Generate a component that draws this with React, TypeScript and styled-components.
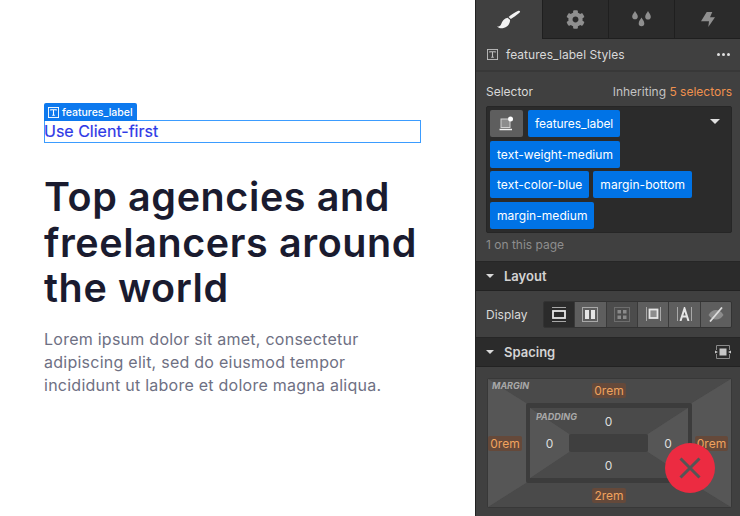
import styled, { createGlobalStyle } from 'styled-components';
import { FaCog } from 'react-icons/fa';

const GlobalStyle = createGlobalStyle`
  html, body { margin: 0; padding: 0; background: #fff; }
  * { box-sizing: border-box; }
  #root { width: 740px; height: 516px; overflow: hidden; }
`;

const Page = styled.div`
  width: 740px;
  height: 516px;
  display: flex;
  overflow: hidden;
  font-family: Inter, 'Liberation Sans', sans-serif;
`;

const Canvas = styled.main`
  width: 475px;
  flex: none;
  padding: 120px 54px 0 44px;
  background: #fff;
`;

const Selected = styled.div`
  position: relative;
  height: 23px;
  width: 377px;
  border: 1px solid #3b9cff;
  font-size: 16px;
  line-height: 21px;
  font-weight: 400;
  letter-spacing: 0;
  text-indent: -1px;
  color: #2d38e6;
  white-space: nowrap;
  -webkit-text-stroke: 0.2px #2d38e6;
`;

const SelectedTag = styled.div`
  position: absolute;
  left: -1px;
  top: -18px;
  height: 18px;
  padding: 0 4px;
  display: flex;
  align-items: center;
  gap: 3px;
  background: #0d79ee;
  border-radius: 2px 2px 0 0;
  color: #fff;
  font-size: 10.5px;
  font-weight: 500;
  text-indent: 0;
  -webkit-text-stroke: 0;
`;

const Title = styled.h1`
  margin: 32px 0 0;
  font-size: 39.5px;
  line-height: 45.5px;
  font-weight: 600;
  letter-spacing: 0.6px;
  color: #1a1b2f;
  white-space: nowrap;
`;

const Lead = styled.p`
  margin: 16px 0 0;
  font-size: 16px;
  line-height: 23.2px;
  color: #6e7083;
  white-space: nowrap;
  letter-spacing: 0.25px;
`;

const Panel = styled.aside`
  position: relative;
  flex: 1;
  border-left: 1px solid #222;
  background: #404040;
  color: #d9d9d9;
  font-size: 12px;
  overflow: hidden;
`;

const Tabs = styled.div`
  display: grid;
  grid-template-columns: 67px 66px 66px 1fr;
  height: 39px;
  background: #2b2b2b;
`;

const Tab = styled.div<{ $active?: boolean }>`
  display: flex;
  align-items: center;
  justify-content: center;
  color: ${(p) => (p.$active ? '#f2f2f2' : '#8f8f8f')};
  background: ${(p) => (p.$active ? '#404040' : '#2b2b2b')};
  border-right: 1px solid #1f1f1f;
  border-bottom: ${(p) => (p.$active ? 'none' : '1px solid #1f1f1f')};
  &:last-child { border-right: none; }
`;

const PanelHead = styled.div`
  height: 33px;
  padding: 0 10px 0 11px;
  display: flex;
  align-items: center;
  gap: 8px;
  border-bottom: 2px solid #383838;
  color: #d9d9d9;
`;

const HeadName = styled.span`
  flex: 1;
  letter-spacing: 0.05px;
`;

const Dots = styled.span`
  display: flex;
  gap: 2px;
  i { width: 3px; height: 3px; border-radius: 50%; background: #e0e0e0; }
`;

const SelectorBlock = styled.section`
  padding: 12px 8px 0 10px;
  height: 189px;
`;

const SelectorHead = styled.div`
  display: flex;
  justify-content: space-between;
  line-height: 16px;
`;

const Inherit = styled.span`
  color: #c4c4c4;
  b { font-weight: 400; color: #f0914e; }
`;

const SelectorBox = styled.div`
  position: relative;
  margin-top: 6px;
  width: 246px;
  height: 127px;
  padding: 3px 20px 0 3px;
  display: flex;
  flex-wrap: wrap;
  align-content: flex-start;
  gap: 3.7px 4px;
  background: #2b2b2b;
  border: 1px solid #262626;
  border-radius: 2px;
`;

const SymbolButton = styled.div`
  width: 33px;
  height: 27px;
  margin-right: 1px;
  display: flex;
  align-items: center;
  justify-content: center;
  background: #5e5e5e;
  border-radius: 2px;
  color: #e6e6e6;
`;

const Chip = styled.span<{ $squeeze?: boolean }>`
  height: 27px;
  padding: 0 7px;
  display: flex;
  align-items: center;
  background: #0073e6;
  border-radius: 2px;
  color: #fff;
  font-size: 12px;
  letter-spacing: ${(p) => (p.$squeeze ? '-0.09px' : '0.05px')};
`;

const Caret = styled.span`
  position: absolute;
  right: 11px;
  top: 12px;
  border-left: 5px solid transparent;
  border-right: 5px solid transparent;
  border-top: 5px solid #e0e0e0;
`;

const OnPage = styled.div`
  margin-top: 4px;
  color: #8e8e8e;
  line-height: 16px;
`;

const SectionHead = styled.div`
  height: 30px;
  padding: 0 9px 0 10px;
  display: flex;
  align-items: center;
  gap: 10px;
  background: #2b2b2b;
  border-top: 1px solid #262626;
  border-bottom: 1px solid #222;
  font-size: 13px;
  font-weight: 600;
  color: #d4d4d4;
  span { flex: 1; }
`;

const SmallCaret = styled.i`
  border-left: 4px solid transparent;
  border-right: 4px solid transparent;
  border-top: 4px solid #d9d9d9;
`;

const DisplayRow = styled.div`
  height: 46px;
  padding: 0 8px 0 10px;
  display: flex;
  align-items: center;
  justify-content: space-between;
`;

const Segments = styled.div`
  display: flex;
  width: 189px;
  height: 27px;
  border: 1px solid #333;
  border-radius: 2px;
  overflow: hidden;
`;

const Segment = styled.div<{ $active?: boolean; $dim?: boolean }>`
  flex: 1;
  display: flex;
  align-items: center;
  justify-content: center;
  background: ${(p) => (p.$active ? '#2b2b2b' : p.$dim ? '#4c4c4c' : '#5e5e5e')};
  color: ${(p) => (p.$dim ? '#8a8a8a' : '#e6e6e6')};
  border-right: 1px solid #3a3a3a;
  &:last-child { border-right: none; }
`;

const SpacingBody = styled.div`
  padding: 11px 8px 0 11px;
`;

const MarginBox = styled.div`
  position: relative;
  width: 245px;
  height: 130px;
  display: grid;
  grid-template-columns: 38px 166px 39px;
  grid-template-rows: 24px 80px 24px;
  background: #4f4f4f;
  border: 1px solid #383838;
  border-radius: 2px;
`;

const Bevel = styled.svg`
  position: absolute;
  inset: 0;
  width: 100%;
  height: 100%;
`;

const MarginLabel = styled.span`
  position: absolute;
  left: 4px;
  top: 1px;
  font-size: 9px;
  font-weight: 700;
  font-style: italic;
  color: #a8a8a8;
`;

const PaddingLabel = styled(MarginLabel)`
  left: 6px;
  top: 3px;
`;

const Cell = styled.div<{ $column: number; $row: number; $nudge?: number; $lift?: number }>`
  position: relative;
  grid-column: ${(p) => p.$column};
  grid-row: ${(p) => p.$row};
  padding-right: ${(p) => p.$nudge ?? 0}px;
  padding-bottom: ${(p) => p.$lift ?? 0}px;
  display: flex;
  align-items: center;
  justify-content: center;
`;

const Changed = styled.span`
  padding: 0 2px;
  height: 15px;
  line-height: 15px;
  background: #65493a;
  border-radius: 2px;
  color: #f0a35e;
  font-size: 12px;
`;

const Plain = styled.span`
  color: #dedede;
  font-size: 12px;
`;

const PaddingRing = styled.div`
  position: relative;
  grid-column: 2;
  grid-row: 2;
  border-style: solid;
  border-width: 5px 4px;
  border-color: #3c3c3c;
  border-radius: 2px;
  display: grid;
  grid-template-columns: 39px 79px 40px;
  grid-template-rows: 26px 18px 26px;
  background: #4f4f4f;
`;

const CenterBlock = styled.div`
  position: relative;
  grid-column: 2;
  grid-row: 2;
  background: #3f3f3f;
  border-radius: 2px;
`;

const CloseFab = styled.button`
  position: absolute;
  left: 189px;
  top: 443px;
  width: 50px;
  height: 50px;
  padding: 0;
  border: none;
  border-radius: 50%;
  background: #ec2b41;
  color: #555;
  display: flex;
  align-items: center;
  justify-content: center;
`;

const bevelFaces = (w: number, h: number, l: number, t: number, r: number, b: number) => [
  { points: `0,0 ${w},0 ${r},${t} ${l},${t}`, fill: '#4a4a4a' },
  { points: `0,${h} ${w},${h} ${r},${b} ${l},${b}`, fill: '#4a4a4a' },
  { points: `0,0 ${l},${t} ${l},${b} 0,${h}`, fill: '#565656' },
  { points: `${w},0 ${r},${t} ${r},${b} ${w},${h}`, fill: '#565656' },
];

const Faces = ({ w, h, l, t, r, b }: Record<'w' | 'h' | 'l' | 't' | 'r' | 'b', number>) => (
  <Bevel viewBox={`0 0 ${w} ${h}`} preserveAspectRatio="none">
    {bevelFaces(w, h, l, t, r, b).map((face) => (
      <polygon key={face.points} points={face.points} fill={face.fill} />
    ))}
  </Bevel>
);

const TextBoxIcon = ({ color = '#bdbdbd' }: { color?: string }) => (
  <svg width="11" height="11" viewBox="0 0 12 12" fill="none">
    <rect x="0.5" y="0.5" width="11" height="11" stroke={color} />
    <path d="M3 3.800V3h6v.8M6 3v6M4.600 9h2.800" stroke={color} strokeWidth="1.200" />
  </svg>
);

const BrushIcon = () => (
  <svg width="24" height="19" viewBox="0 0 24 19" fill="currentColor">
    <path d="M23 1.200c.3.6-.3 1.300-1.200 2.100-2.400 2.200-5 4.100-8 5.800l-2.200-2C14.200 4.600 17.600 2.400 20.800 1 21.900.5 22.700.6 23 1.200Z" />
    <path d="M10.700 7.800l2.400 2.200c-.2 4-2.600 7.600-7.400 8.200C3.800 18.400 1.600 18 0 16.400c2 .2 3.100-.4 4-2 1.200-3.400 3.300-6 6.700-6.600Z" />
  </svg>
);

const DropsIcon = () => (
  <svg width="19" height="16" viewBox="0 0 19 16" fill="currentColor">
    <path d="M3 0c1 2 2.800 3.500 2.800 5.400A2.800 2.800 0 0 1 .2 5.400C.2 3.500 2 2 3 0Z" />
    <path d="M16 0c1 2 2.800 3.500 2.800 5.800a2.800 2.800 0 0 1-5.600 0C13.200 3.500 15 2 16 0Z" />
    <path d="M9.500 6.500c1 2 2.800 3.400 2.800 6a2.800 2.800 0 0 1-5.600 0c0-2.600 1.800-4 2.800-6Z" />
  </svg>
);

const BoltIcon = () => (
  <svg width="14" height="15" viewBox="0 0 14 15" fill="currentColor">
    <path d="M5.700 0h5.600L9 5.300h5L7.300 15 8 9.300H0L5.700 0Z" />
  </svg>
);

const SymbolIcon = () => (
  <svg width="15" height="15" viewBox="0 0 15 15">
    <rect x="2" y="3" width="9" height="8.500" fill="#8c8c8c" stroke="#d0d0d0" />
    <path d="M.5 13.500h12.500" stroke="#f2f2f2" strokeWidth="1.500" />
    <circle cx="11.500" cy="3" r="2.500" fill="#fff" />
  </svg>
);

const SpacingIcon = () => (
  <svg width="16" height="16" viewBox="0 0 16 16" fill="none" stroke="#8a8a8a">
    <rect x="4.500" y="4.500" width="7" height="7" fill="#c8c8c8" stroke="none" />
    <path d="M1.500 6V1.500h13V6M1.500 10v4.500h13V10" />
    <path d="M0 6.500 3 8 0 9.500ZM16 6.500 13 8l3 1.500Z" fill="#c8c8c8" stroke="none" />
  </svg>
);

const blockIcon = (
  <svg width="14" height="15" viewBox="0 0 14 15" fill="none" stroke="currentColor">
    <path d="M0 .5h14M0 14.500h14" stroke="#a8a8a8" />
    <rect x="1" y="4" width="12" height="7" strokeWidth="1.800" />
  </svg>
);

const flexIcon = (
  <svg width="16" height="15" viewBox="0 0 16 15" fill="currentColor">
    <rect x="0.500" y="0.500" width="15" height="14" fill="none" stroke="#a8a8a8" />
    <rect x="3" y="3" width="4" height="9" />
    <rect x="9" y="3" width="4" height="9" />
  </svg>
);

const gridIcon = (
  <svg width="16" height="15" viewBox="0 0 16 15" fill="currentColor">
    <rect x="0.500" y="0.500" width="15" height="14" fill="none" stroke="#6e6e6e" />
    <rect x="3.500" y="3" width="3.500" height="3.500" />
    <rect x="9" y="3" width="3.500" height="3.500" />
    <rect x="3.500" y="8.500" width="3.500" height="3.500" />
    <rect x="9" y="8.500" width="3.500" height="3.500" />
  </svg>
);

const inlineBlockIcon = (
  <svg width="15" height="14" viewBox="0 0 15 14" fill="none" stroke="currentColor">
    <path d="M.5 0v14M14.500 0v14" stroke="#a8a8a8" />
    <rect x="3.500" y="2.500" width="8" height="8.500" fill="#8c8c8c" strokeWidth="1.800" />
  </svg>
);

const inlineIcon = (
  <svg width="15" height="14" viewBox="0 0 15 14" fill="none" stroke="currentColor">
    <path d="M.5 0v14M14.500 0v14" stroke="#a8a8a8" />
    <path d="M3.500 14 7.500 1.500l4 12.500M5 9.500h5" strokeWidth="2" />
  </svg>
);

const hiddenIcon = (
  <svg width="16" height="15" viewBox="0 0 16 15" fill="none">
    <path d="M.5 8C2.500 4.500 5 3 8 3s5.500 1.500 7.500 5c-2 3-4.500 4.500-7.500 4.500S2.500 11 .5 8Z" fill="#8c8c8c" />
    <path d="M2 14.500 14 .5" stroke="#dcdcdc" strokeWidth="1.800" />
  </svg>
);

const App = () => {
  return (
    <Page>
      <GlobalStyle />
      <Canvas>
        <Selected>
          <SelectedTag>
            <TextBoxIcon color="#fff" />
            features_label
          </SelectedTag>
          Use Client-first
        </Selected>
        <Title>
          Top agencies and
          <br />
          freelancers around
          <br />
          the world
        </Title>
        <Lead>
          Lorem ipsum dolor sit amet, consectetur
          <br />
          adipiscing elit, sed do eiusmod tempor
          <br />
          incididunt ut labore et dolore magna aliqua.
        </Lead>
      </Canvas>
      <Panel>
        <Tabs>
          <Tab $active><BrushIcon /></Tab>
          <Tab><FaCog size={19} /></Tab>
          <Tab><DropsIcon /></Tab>
          <Tab><BoltIcon /></Tab>
        </Tabs>
        <PanelHead>
          <TextBoxIcon />
          <HeadName>features_label Styles</HeadName>
          <Dots><i /><i /><i /></Dots>
        </PanelHead>
        <SelectorBlock>
          <SelectorHead>
            <span>Selector</span>
            <Inherit>Inheriting <b>5 selectors</b></Inherit>
          </SelectorHead>
          <SelectorBox>
            <SymbolButton><SymbolIcon /></SymbolButton>
            <Chip $squeeze>features_label</Chip>
            <Chip>text-weight-medium</Chip>
            <Chip>text-color-blue</Chip>
            <Chip>margin-bottom</Chip>
            <Chip>margin-medium</Chip>
            <Caret />
          </SelectorBox>
          <OnPage>1 on this page</OnPage>
        </SelectorBlock>
        <SectionHead>
          <SmallCaret />
          <span>Layout</span>
        </SectionHead>
        <DisplayRow>
          <span>Display</span>
          <Segments>
            <Segment $active>{blockIcon}</Segment>
            <Segment>{flexIcon}</Segment>
            <Segment $dim>{gridIcon}</Segment>
            <Segment>{inlineBlockIcon}</Segment>
            <Segment>{inlineIcon}</Segment>
            <Segment>{hiddenIcon}</Segment>
          </Segments>
        </DisplayRow>
        <SectionHead>
          <SmallCaret />
          <span>Spacing</span>
          <SpacingIcon />
        </SectionHead>
        <SpacingBody>
          <MarginBox>
            <Faces w={243} h={128} l={38} t={24} r={204} b={104} />
            <MarginLabel>MARGIN</MarginLabel>
            <Cell $column={2} $row={1} $lift={2}><Changed>0rem</Changed></Cell>
            <Cell $column={1} $row={2} $nudge={4}><Changed>0rem</Changed></Cell>
            <PaddingRing>
              <Faces w={158} h={70} l={39} t={26} r={118} b={44} />
              <PaddingLabel>PADDING</PaddingLabel>
              <Cell $column={2} $row={1}><Plain>0</Plain></Cell>
              <Cell $column={1} $row={2}><Plain>0</Plain></Cell>
              <CenterBlock />
              <Cell $column={3} $row={2}><Plain>0</Plain></Cell>
              <Cell $column={2} $row={3}><Plain>0</Plain></Cell>
            </PaddingRing>
            <Cell $column={3} $row={2}><Changed>0rem</Changed></Cell>
            <Cell $column={2} $row={3}><Changed>2rem</Changed></Cell>
          </MarginBox>
        </SpacingBody>
        <CloseFab aria-label="Close">
          <svg width="24" height="24" viewBox="0 0 24 24" stroke="currentColor" strokeWidth="3">
            <path d="M2.500 2.500 21.500 21.500M21.500 2.500 2.500 21.500" />
          </svg>
        </CloseFab>
      </Panel>
    </Page>
  );
};

export default App;
